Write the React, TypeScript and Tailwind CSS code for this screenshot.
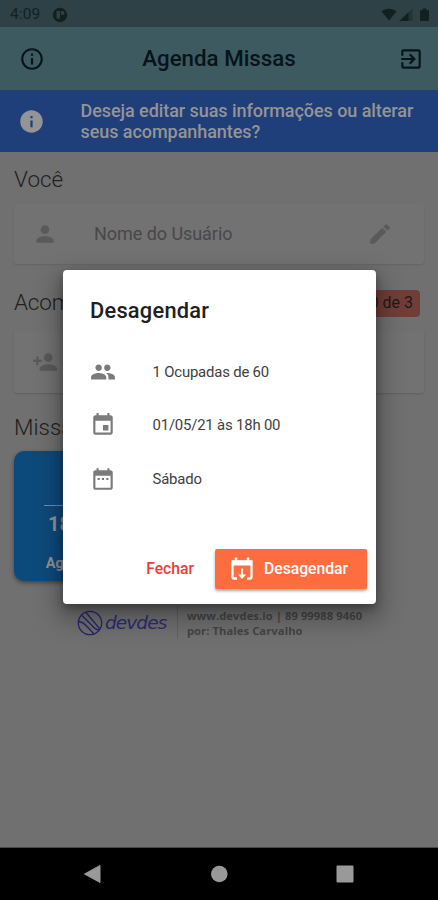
import type { ReactNode } from 'react';
import {
  MdInfoOutline,
  MdInfo,
  MdExitToApp,
  MdPerson,
  MdEdit,
  MdPersonAdd,
  MdPeople,
  MdEvent,
  MdDateRange,
} from 'react-icons/md';

function StatusBar() {
  return (
    <div className="flex h-[27px] items-center bg-[#2d4147] pl-[10px] pr-[7px] pt-[2px] text-[#13211f]">
      <span className="w-[42px] text-[15.5px] tracking-[0.1px]">4:09</span>
      <svg width="16" height="16" viewBox="0 0 16 16">
        <circle cx="8" cy="8" r="7.2" fill="#12211f" />
        <path d="M4.500 4h3.500v7.500h-3.500zM9 4h1.500a2 2 0 0 1 0 4H9z" fill="#2d4147" />
      </svg>
      <div className="grow" />
      <svg width="50" height="16" viewBox="0 0 50 16" fill="#12211f">
        <path d="M0.500 4.500C4.500 .7 11.500 .7 15.500 4.500L8 13.500z" />
        <path d="M31.500 1.500V14H18.500z" opacity="0.4" />
        <path d="M27.500 5.300V14H18.500z" />
        <path d="M41.700 1.500h3.600V3H47q1 0 1 1v9q0 1-1 1h-7q-1 0-1-1V4q0-1 1-1h1.700z" />
      </svg>
    </div>
  );
}

function LogoMark() {
  return (
    <svg width="26" height="26" viewBox="0 0 26 26" fill="none" stroke="#26266c" strokeWidth="1.3">
      <circle cx="13" cy="13" r="11.700" />
      <path d="M9 2.500L22.500 18.500M5 5.500L15 15.500Q18 19.500 22 20M2 11.500q4 .5 7 4l8 8.500" />
    </svg>
  );
}

function CalendarDown() {
  return (
    <svg width="24" height="26" viewBox="0 0 24 26" fill="none" stroke="#fff">
      <path d="M7 22.500H4.200q-1.700 0-1.700-1.700V5.500h19v15.300q0 1.700-1.700 1.700H17" strokeWidth="2.300" />
      <path d="M2 4.500h20v5H2z" fill="#fff" stroke="none" />
      <path d="M6 1.500v4M18 1.500v4" strokeWidth="2.500" />
      <path d="M12 12.500v8" strokeWidth="2" />
      <path d="M8 18.500h8l-4 4.500z" fill="#fff" stroke="none" />
    </svg>
  );
}

function InfoRow({ icon, children }: { icon: ReactNode; children: ReactNode }) {
  return (
    <div className="flex h-[53.500px] items-center text-[14.900px] tracking-[-0.180px] text-[#404040]">
      <span className="w-[62.500px] text-[26px] text-[#7b7b7b]">{icon}</span>
      {children}
    </div>
  );
}

function Dialog() {
  return (
    <section className="absolute left-[63px] top-[270px] flex h-[334px] w-[313px] flex-col rounded-[4px] bg-white shadow-[0_11px_24px_6px_rgba(0,0,0,0.28),0_4px_9px_rgba(0,0,0,0.3)]">
      <h2 className="pl-[27px] pt-[26px] text-[21.800px] leading-[30px] font-medium tracking-[0.250px] text-[#202020]">
        Desagendar
      </h2>
      <div className="pl-[27px] pt-[19px]">
        <InfoRow icon={<MdPeople />}>1 Ocupadas de 60</InfoRow>
        <InfoRow icon={<MdEvent />}>01/05/21 às 18h 00</InfoRow>
        <InfoRow icon={<MdDateRange />}>Sábado</InfoRow>
      </div>
      <div className="mt-auto mb-[15px] flex items-center justify-end pr-[9px]">
        <button className="mr-[21px] text-[15.700px] font-medium text-[#f03a36]">Fechar</button>
        <button className="flex h-[40px] w-[152px] items-center rounded-[2px] bg-[#fe6d3f] pl-[15px] text-[15.700px] font-medium text-white shadow-[0_2px_3px_rgba(0,0,0,0.35)]">
          <CalendarDown />
          <span className="ml-[10px]">Desagendar</span>
        </button>
      </div>
    </section>
  );
}

export default function App() {
  return (
    <div className="relative flex h-[900px] w-[438px] flex-col overflow-hidden bg-[#707070] font-[Roboto,sans-serif]">
      <StatusBar />
      <header className="flex h-[63px] items-center justify-between bg-[#3c5a60] pl-[19px] pr-[14px] text-[#08131a]">
        <MdInfoOutline size={26} />
        <h1 className="mr-[5px] pt-[1px] text-[22.300px] font-medium">Agenda Missas</h1>
        <MdExitToApp size={26} />
      </header>
      <div className="flex h-[62px] items-center bg-[#1f3f7b] pl-[18px] text-[#949494]">
        <MdInfo size={27} />
        <p className="ml-[35.500px] text-[18px] leading-[21px] font-medium tracking-[-0.060px]">
          Deseja editar suas informações ou alterar
          <br />
          seus acompanhantes?
        </p>
      </div>
      <main className="flex grow flex-col px-[14px] pt-[13px] text-[#202020]">
        <h2 className="text-[22.500px] leading-[28px] font-light">Você</h2>
        <div className="mt-[11px] flex h-[60px] items-center rounded-[3px] bg-[#727272] px-[18px] text-[#5a5a5a] shadow-[0_1px_2px_rgba(0,0,0,0.12)]">
          <MdPerson size={26} />
          <span className="ml-[36px] grow pb-[1px] text-[18px] tracking-[-0.050px] text-[#484848]">Nome do Usuário</span>
          <MdEdit size={26} className="mr-[13px]" />
        </div>
        <div className="mt-[25px] flex h-[28px] items-center">
          <h2 className="w-[340px] text-[22.500px] font-light tracking-[-0.200px]">Acompanhantes</h2>
          <span className="flex h-[27px] w-[66px] items-center justify-end rounded-[4px] bg-[#713e37] px-[7px] text-[16px] text-[#211817]">
            0 de 3
          </span>
        </div>
        <div className="mt-[14px] flex h-[62px] items-center rounded-[3px] bg-[#727272] px-[18px] text-[#5a5a5a] shadow-[0_1px_2px_rgba(0,0,0,0.15)]">
          <MdPersonAdd size={26} />
        </div>
        <h2 className="mt-[19px] text-[22.500px] leading-[30px] font-light">Missas</h2>
        <div className="mt-[9px] flex h-[130px] w-[130px] flex-col items-center rounded-[10px] bg-[#0d4a7c] pt-[32px] font-bold text-[#949494] shadow-[0_2px_4px_rgba(0,0,0,0.4)]">
          <span className="text-[18px] leading-[20px]">Sáb</span>
          <div className="mt-[2px] w-[70px] border-t border-[#7b8c9a]" />
          <span className="mt-[5px] text-[20px] leading-[26px]">18h 00</span>
          <span className="mt-[18px] text-[14.500px] leading-[18px]">Agendado</span>
        </div>
        <footer className="mt-[25px] flex items-center pl-[63px]">
          <LogoMark />
          <span className="ml-[2px] font-['DejaVu_Sans',sans-serif] text-[18.500px] leading-[30px] font-extralight italic tracking-[-0.900px] text-[#2c2c70]">
            devdes
          </span>
          <div className="ml-[11px] h-[33px] border-l border-[#606060]" />
          <p className="ml-[8.500px] font-['Open_Sans',sans-serif] text-[11.200px] leading-[15px] font-bold tracking-[0.080px] whitespace-nowrap text-[#444]">
            www.devdes.io | 89 99988 9460
            <br />
            por: Thales Carvalho
          </p>
        </footer>
      </main>
      <nav className="h-[53px] border-t border-[#484848] bg-black">
        <svg width="438" height="52" viewBox="0 0 438 52" fill="#999">
          <path d="M100 17.500v17L84.500 26z" stroke="#999" strokeLinejoin="round" />
          <circle cx="219.300" cy="26" r="8.300" />
          <rect x="336.500" y="17.500" width="17" height="17" rx="1" />
        </svg>
      </nav>
      <Dialog />
    </div>
  );
}
